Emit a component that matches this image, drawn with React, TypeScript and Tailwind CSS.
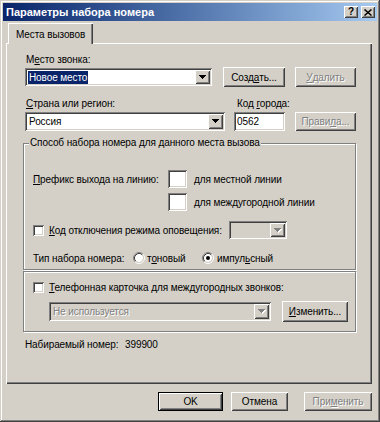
import type { ReactNode } from "react"

const raised =
  "shadow-[inset_1px_1px_#ffffff,inset_-1px_-1px_#404040,inset_2px_2px_#d4d0c8,inset_-2px_-2px_#808080]"
const sunken =
  "shadow-[inset_1px_1px_#808080,inset_-1px_-1px_#ffffff,inset_2px_2px_#404040,inset_-2px_-2px_#d4d0c8]"
const dim = "text-[#808080] [text-shadow:1px_1px_#ffffff]"
const etched = "border border-[#808080] shadow-[inset_1px_1px_#ffffff,1px_1px_#ffffff]"

function U({ children }: { children: ReactNode }) {
  return <span className="underline underline-offset-[1px]">{children}</span>
}

function Btn({
  className = "",
  disabled,
  def,
  children,
}: {
  className?: string
  disabled?: boolean
  def?: boolean
  children: ReactNode
}) {
  return (
    <div className={`flex bg-[#d4d0c8] ${def ? "border border-black" : ""} ${className}`}>
      <div
        className={`flex w-full h-full items-center justify-center leading-[13px] whitespace-nowrap ${raised} ${
          disabled ? dim : "text-black"
        }`}
      >
        {children}
      </div>
    </div>
  )
}

function Arrow({ disabled }: { disabled?: boolean }) {
  return (
    <svg width="8" height="5" viewBox="0 0 8 5">
      {disabled && (
        <path d="M1 1h7v1H1zM2 2h5v1H2zM3 3h3v1H3zM4 4h1v1H4z" fill="#ffffff" />
      )}
      <path
        d="M0 0h7v1H0zM1 1h5v1H1zM2 2h3v1H2zM3 3h1v1H3z"
        fill={disabled ? "#808080" : "#000000"}
      />
    </svg>
  )
}

function Combo({
  className = "",
  disabled,
  children,
}: {
  className?: string
  disabled?: boolean
  children?: ReactNode
}) {
  return (
    <div
      className={`flex p-[2px] ${sunken} ${disabled ? "bg-[#d4d0c8]" : "bg-white"} ${className}`}
    >
      <div className="flex-1 min-w-0 flex items-center pl-[1px] leading-[13px] whitespace-nowrap">
        {children}
      </div>
      <div className={`w-[15px] flex items-center justify-center bg-[#d4d0c8] ${raised}`}>
        <Arrow disabled={disabled} />
      </div>
    </div>
  )
}

function Box({ className = "", children }: { className?: string; children?: ReactNode }) {
  return (
    <div className={`flex items-center pl-[3px] bg-white leading-[13px] ${sunken} ${className}`}>
      {children}
    </div>
  )
}

function Check() {
  return <div className={`w-[11px] h-[11px] bg-white shrink-0 ${sunken}`} />
}

function Radio({ checked }: { checked?: boolean }) {
  return (
    <svg width="12" height="12" viewBox="0 0 12 12" className="shrink-0">
      <circle cx="6" cy="6" r="4" fill="#ffffff" />
      <path d="M9.89 2.11A5.5 5.5 0 0 0 2.11 9.89" stroke="#808080" fill="none" />
      <path d="M2.11 9.89A5.5 5.5 0 0 0 9.89 2.11" stroke="#ffffff" fill="none" />
      <path d="M9.18 2.82A4.5 4.5 0 0 0 2.82 9.18" stroke="#404040" fill="none" />
      <path d="M2.82 9.18A4.5 4.5 0 0 0 9.18 2.82" stroke="#d4d0c8" fill="none" />
      {checked && <circle cx="6" cy="6" r="2" fill="#000000" />}
    </svg>
  )
}

export default function App() {
  return (
    <div className="w-[380px] h-[422px] bg-[#d4d0c8] p-[3px] flex flex-col shadow-[inset_-1px_-1px_#404040,inset_1px_1px_#d4d0c8,inset_-2px_-2px_#808080,inset_2px_2px_#ffffff] font-['Liberation_Sans',Arial,sans-serif] text-[10px] tracking-[-0.1px] text-black whitespace-nowrap">
      {/* Title bar */}
      <div className="h-[18px] flex items-center pl-[3px] pr-[2px] bg-linear-to-r from-[#0a246a] to-[#a6caf0]">
        <span className="flex-1 font-bold text-white text-[11px] tracking-normal">
          Параметры набора номера
        </span>
        <div className={`w-[14px] h-[12px] flex items-center justify-center bg-[#d4d0c8] ${raised}`}>
          <span className="font-bold text-[10px] leading-[10px]">?</span>
        </div>
        <div
          className={`ml-[3px] w-[14px] h-[12px] flex items-center justify-center bg-[#d4d0c8] ${raised}`}
        >
          <svg width="8" height="7" viewBox="0 0 8 7">
            <path d="M0.5 0.5L7.5 6.5M7.5 0.5L0.5 6.5" stroke="#000000" strokeWidth="1.5" />
          </svg>
        </div>
      </div>

      {/* Body */}
      <div className="flex-1 flex flex-col pl-[3px] pr-[5px] pt-[2px]">
        {/* Tab */}
        <div className="flex pl-[2px]">
          <div className="relative z-10 w-[85px] h-[21px] pl-[8px] pt-[5px] bg-[#d4d0c8] leading-[13px] shadow-[inset_1px_1px_#ffffff,inset_-1px_0_#404040,inset_-2px_0_#808080]">
            Места вызовов
          </div>
        </div>

        {/* Panel */}
        <div className="-mt-[1px] h-[341px] flex flex-col pl-[17px] pt-[10px] shadow-[inset_1px_1px_#ffffff,inset_-1px_-1px_#404040,inset_-2px_-2px_#808080]">
          <div className="ml-[3px] h-[13px] leading-[13px]">
            М<U>е</U>сто звонка:
          </div>
          <div className="mt-[1px] ml-[2px] h-[20px] flex items-start">
            <Combo className="mt-[1px] w-[187px] h-[18px]">
              <span className="bg-[#0a246a] text-white px-[1px]">Новое место</span>
            </Combo>
            <Btn className="ml-[11px] w-[62px] h-[20px]">
              Созд<U>а</U>ть...
            </Btn>
            <Btn className="ml-[10px] w-[61px] h-[20px]" disabled>
              <U>У</U>далить
            </Btn>
          </div>

          <div className="mt-[10px] ml-[2px] flex items-end">
            <div className="w-[200px] flex flex-col">
              <div className="ml-[1px] h-[13px] leading-[13px]">
                <U>С</U>трана или регион:
              </div>
              <Combo className="mt-[2px] h-[19px]">
                <span className="pl-[1px]">Россия</span>
              </Combo>
            </div>
            <div className="ml-[9px] w-[51px] flex flex-col">
              <div className="ml-[3px] h-[13px] leading-[13px]">
                Код <U>г</U>орода:
              </div>
              <Box className="mt-[2px] h-[19px]">0562</Box>
            </div>
            <Btn className="ml-[10px] w-[61px] h-[19px]" disabled>
              Прави<U>л</U>а...
            </Btn>
          </div>

          {/* Dialing group */}
          <div className={`relative mt-[12px] w-[333px] h-[127px] flex flex-col pl-[9px] ${etched}`}>
            <span className="absolute left-[5px] -top-[8px] px-[1px] bg-[#d4d0c8] leading-[13px]">
              Способ набора номера для данного места вызова
            </span>
            <div className="mt-[26px] h-[18px] flex items-center">
              <span className="w-[135px]">
                <U>П</U>рефикс выхода на линию:
              </span>
              <Box className="w-[19px] h-[18px]" />
              <span className="ml-[7px]">для местной линии</span>
            </div>
            <div className="mt-[5px] h-[18px] flex items-center">
              <Box className="ml-[135px] w-[19px] h-[18px]" />
              <span className="ml-[7px]">для междугородной линии</span>
            </div>
            <div className="mt-[10px] h-[18px] flex items-center">
              <div className="w-[196px] flex items-center">
                <Check />
                <span className="ml-[5px]">
                  <U>К</U>од отключения режима оповещения:
                </span>
              </div>
              <Combo className="w-[58px] h-[18px]" disabled />
            </div>
            <div className="mt-[10px] h-[18px] flex items-center">
              <span className="w-[100px]">Тип набора номера:</span>
              <div className="w-[69px] flex items-center">
                <Radio />
                <span className="ml-[2px]">
                  т<U>о</U>новый
                </span>
              </div>
              <Radio checked />
              <span className="ml-[3px]">
                импул<U>ь</U>сный
              </span>
            </div>
          </div>

          {/* Calling card group */}
          <div className={`mt-[1px] w-[333px] h-[61px] flex flex-col pl-[9px] ${etched}`}>
            <div className="mt-[6px] h-[18px] flex items-center">
              <Check />
              <span className="ml-[5px]">
                <U>Т</U>елефонная карточка для междугородных звонков:
              </span>
            </div>
            <div className="mt-[5px] ml-[16px] flex items-start">
              <Combo className="mt-[1px] w-[222px] h-[19px]" disabled>
                <span className={`pl-[1px] ${dim}`}>Не используется</span>
              </Combo>
              <Btn className="ml-[11px] w-[66px] h-[21px]">
                <U>И</U>зменить...
              </Btn>
            </div>
          </div>

          <div className="mt-[6px] ml-[2px] h-[13px] leading-[13px] flex">
            <span className="w-[100px]">Набираемый номер:</span>
            <span>399900</span>
          </div>
        </div>

        {/* Dialog buttons */}
        <div className="mt-[8px] flex justify-end">
          <Btn className="w-[65px] h-[19px]" def>
            OK
          </Btn>
          <Btn className="ml-[8px] w-[57px] h-[19px]">Отмена</Btn>
          <Btn className="ml-[16px] w-[68px] h-[19px]" disabled>
            При<U>м</U>енить
          </Btn>
        </div>
      </div>
    </div>
  )
}
